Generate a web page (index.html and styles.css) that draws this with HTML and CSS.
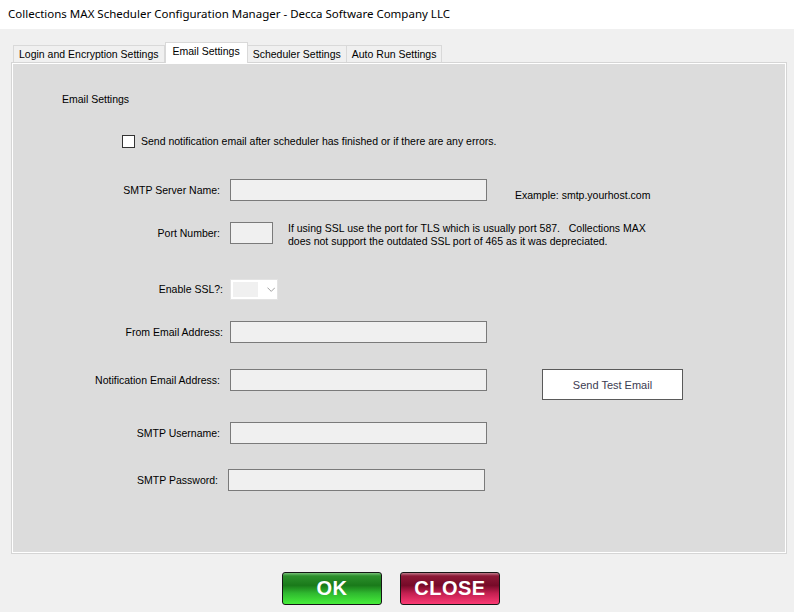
FILE: index.html
```html
<!DOCTYPE html>
<html lang="en">
<head>
  <meta charset="UTF-8">
  <meta name="viewport" content="width=device-width, initial-scale=1.0">
  <title>Collections MAX Scheduler Configuration Manager</title>
  <link rel="stylesheet" href="styles.css">
</head>
<body>
<div class="titlebar">Collections MAX Scheduler Configuration Manager - Decca Software Company LLC</div>

<div class="window">
  <div class="tabs">
    <div class="tab">Login and Encryption Settings</div>
    <div class="tab active">Email Settings</div>
    <div class="tab">Scheduler Settings</div>
    <div class="tab">Auto Run Settings</div>
  </div>

  <div class="panel">
    <div class="heading">Email Settings</div>

    <label class="check">
      <span class="box"></span>
      Send notification email after scheduler has finished or if there are any errors.
    </label>

    <div class="row row-server">
      <span class="label">SMTP Server Name:</span>
      <input type="text" class="field">
      <span class="hint">Example: smtp.yourhost.com</span>
    </div>

    <div class="row row-port">
      <span class="label">Port Number:</span>
      <input type="text" class="field field-short">
      <span class="note">If using SSL use the port for TLS which is usually port 587.&nbsp;&nbsp; Collections MAX<br>does not support the outdated SSL port of 465 as it was depreciated.</span>
    </div>

    <div class="row row-ssl">
      <span class="label label-wide">Enable SSL?:</span>
      <div class="combo">
        <span class="combo-value"></span>
        <svg class="chevron" width="9" height="5" viewBox="0 0 9 5"><polyline points="0.5,0.5 4.5,4.5 8.5,0.5" fill="none" stroke="#9a9a9a" stroke-width="1"/></svg>
      </div>
    </div>

    <div class="row row-from">
      <span class="label label-wide">From Email Address:</span>
      <input type="text" class="field">
    </div>

    <div class="row row-notify">
      <span class="label">Notification Email Address:</span>
      <input type="text" class="field">
      <button class="test-btn">Send Test Email</button>
    </div>

    <div class="row row-user">
      <span class="label">SMTP Username:</span>
      <input type="text" class="field">
    </div>

    <div class="row row-pass">
      <span class="label label-narrow">SMTP Password:</span>
      <input type="password" class="field">
    </div>
  </div>

  <div class="footer">
    <button class="glossy ok">OK</button>
    <button class="glossy close">CLOSE</button>
  </div>
</div>
</body>
</html>
```

FILE: styles.css
```css
body {
    margin: 0;
    background-color: #f0f0f0;
    font-family: "Liberation Sans", Arial, sans-serif;
    font-size: 10.5px;
    color: #000;
}
.titlebar {
    height: 29px;
    line-height: 28px;
    padding-left: 8px;
    background-color: #fff;
    font-family: "Noto Sans", "Liberation Sans", sans-serif;
    font-size: 11.5px;
}
.window {
    padding-top: 13px;
}

/* tabs */
.tabs {
    display: flex;
    align-items: flex-end;
    margin-left: 13px;
}
.tab {
    height: 17px;
    line-height: 16px;
    padding: 0 5px;
    border: 1px solid #d9d9d9;
    border-bottom: none;
    border-left: none;
    background-color: #f0f0f0;
    box-sizing: border-box;
}
.tab:first-child {
    border-left: 1px solid #d9d9d9;
}
.tab.active {
    position: relative;
    z-index: 1;
    height: 21px;
    line-height: 17px;
    margin-bottom: -1px;
    padding: 0 7px;
    border-left: 1px solid #d9d9d9;
    background-color: #fff;
}

/* tab page */
.panel {
    width: 776px;
    height: 492px;
    margin-left: 11px;
    padding-top: 30px;
    border: 1px solid #d5d5d5;
    box-shadow: inset 0 0 0 1px #fff;
    background-color: #dcdcdc;
    box-sizing: border-box;
}
.heading {
    margin-left: 50px;
    line-height: 13px;
}
.check {
    display: flex;
    align-items: center;
    margin: 29px 0 0 110px;
    line-height: 13px;
}
.box {
    width: 13px;
    height: 13px;
    margin-right: 6px;
    border: 1px solid #333;
    background-color: #fff;
    box-sizing: border-box;
}

.row {
    display: flex;
    align-items: flex-start;
}
.row-server { margin-top: 31px; }
.row-port   { margin-top: 20px; }
.row-ssl    { margin-top: 31px; }
.row-from   { margin-top: 21px; }
.row-notify { margin-top: 26px; }
.row-user   { margin-top: 22px; }
.row-pass   { margin-top: 25px; }

.label {
    width: 208px;
    margin-right: 10px;
    line-height: 22px;
    text-align: right;
}
.label-wide {
    width: 211px;
    margin-right: 7px;
}
.row-ssl .label {
    line-height: 21px;
}
.label-narrow {
    width: 206px;
}
.field {
    width: 257px;
    height: 22px;
    margin: 0;
    padding: 0 3px;
    border: 1px solid #7a7a7a;
    background-color: #f0f0f0;
    box-sizing: border-box;
    font: inherit;
}
.field-short {
    width: 43px;
}
.hint {
    margin: 10px 0 0 28px;
    line-height: 13px;
}
.note {
    margin-left: 15px;
    line-height: 13px;
}

.combo {
    display: flex;
    align-items: center;
    width: 48px;
    height: 21px;
    padding: 0 2px;
    border: 1px solid #e3e3e3;
    background-color: #fff;
    box-sizing: border-box;
}
.combo-value {
    width: 26px;
    height: 15px;
    background-color: #f0f0f0;
}
.chevron {
    margin-left: 9px;
}

.test-btn {
    width: 141px;
    height: 31px;
    margin-left: 55px;
    border: 1px solid #5a5a5a;
    background-color: #fff;
    color: #3c3c52;
    font: inherit;
    font-size: 11px;
}

/* bottom buttons */
.footer {
    display: flex;
    gap: 18px;
    margin: 18px 0 0 282px;
}
.glossy {
    width: 100px;
    height: 33px;
    padding: 0;
    border: 1px solid #161616;
    border-radius: 3px;
    color: #fff;
    font-family: "Liberation Sans", Arial, sans-serif;
    font-weight: bold;
    font-size: 20px;
    letter-spacing: 0.5px;
}
.ok {
    background: linear-gradient(to bottom, #78c078 0, #2c8f2c 3px, #1a7a1a 40%, #2fb82f 65%, #46ee3a 100%);
}
.close {
    background: linear-gradient(to bottom, #c07a8a 0, #8c1836 3px, #760a28 40%, #c21f50 65%, #fb3a74 100%);
}
```
